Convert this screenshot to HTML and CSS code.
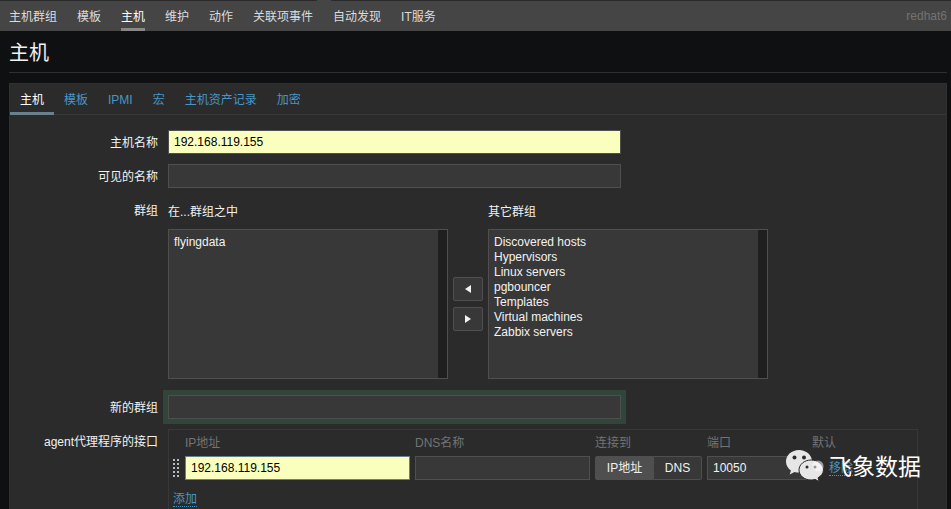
FILE: index.html
```html
<!DOCTYPE html>
<html lang="zh-CN">
<head>
<meta charset="utf-8">
<title>主机</title>
<link rel="stylesheet" href="styles.css">
</head>
<body>
<nav class="topnav">
  <a href="#">主机群组</a>
  <a href="#">模板</a>
  <a href="#" class="current">主机</a>
  <a href="#">维护</a>
  <a href="#">动作</a>
  <a href="#">关联项事件</a>
  <a href="#" class="pointer">自动发现</a>
  <a href="#">IT服务</a>
  <span class="server">redhat6</span>
</nav>
<main class="page">
  <h1>主机</h1>
  <form class="panel">
    <div class="tabs">
      <a href="#" class="current">主机</a>
      <a href="#">模板</a>
      <a href="#">IPMI</a>
      <a href="#">宏</a>
      <a href="#">主机资产记录</a>
      <a href="#">加密</a>
    </div>
    <div class="fields">
      <label class="name" for="host">主机名称</label>
      <input class="wide filled" id="host" type="text" value="192.168.119.155">

      <label class="name" for="visible">可见的名称</label>
      <input class="wide" id="visible" type="text">

      <span class="name">群组</span>
      <div class="groups">
        <div class="group">
          <label for="in-groups">在...群组之中</label>
          <select id="in-groups" multiple size="10">
            <option>flyingdata</option>
          </select>
        </div>
        <div class="movers">
          <button type="button" aria-label="加入"><svg width="6" height="8" viewBox="0 0 6 8"><path d="M6 0v8L0 4z"/></svg></button>
          <button type="button" aria-label="移出"><svg width="6" height="8" viewBox="0 0 6 8"><path d="M0 0v8l6-4z"/></svg></button>
        </div>
        <div class="group">
          <label for="other-groups">其它群组</label>
          <select id="other-groups" multiple size="10">
            <option>Discovered hosts</option>
            <option>Hypervisors</option>
            <option>Linux servers</option>
            <option>pgbouncer</option>
            <option>Templates</option>
            <option>Virtual machines</option>
            <option>Zabbix servers</option>
          </select>
        </div>
      </div>

      <label class="name" for="new-group">新的群组</label>
      <input class="wide highlighted" id="new-group" type="text">

      <span class="name">agent代理程序的接口</span>
      <div class="interfaces">
        <table>
          <thead>
            <tr><th></th><th>IP地址</th><th>DNS名称</th><th>连接到</th><th>端口</th><th>默认</th><th></th></tr>
          </thead>
          <tbody>
            <tr>
              <td class="grip"><svg width="7" height="18" viewBox="0 0 7 18"><path d="M0 0h2v2H0zM4 0h2v2H4zM0 4h2v2H0zM4 4h2v2H4zM0 8h2v2H0zM4 8h2v2H4zM0 12h2v2H0zM4 12h2v2H4zM0 16h2v2H0zM4 16h2v2H4z"/></svg></td>
              <td class="ip"><input class="filled active" type="text" aria-label="IP地址" value="192.168.119.155"></td>
              <td class="dns"><input type="text" aria-label="DNS名称"></td>
              <td class="connect">
                <div class="segmented">
                  <label><input type="radio" name="connect" checked>IP地址</label>
                  <label><input type="radio" name="connect">DNS</label>
                </div>
              </td>
              <td class="port"><input type="text" aria-label="端口" value="10050"></td>
              <td class="default"><input type="radio" name="default" aria-label="默认" checked></td>
              <td class="remove"><a href="#" class="action">移除</a>
                <div class="brand">
                  <svg width="38" height="32" viewBox="0 0 38 32">
                    <path class="bubble" d="M13 0C5.800 0 0 5 0 11.500c0 3.700 1.900 6.800 4.900 8.900L3.700 24.500l4.800-2.600c1.400.4 2.900.6 4.500.6C20.200 22.500 26 17.600 26 11.300S20.200 0 13 0z"/>
                    <path class="bubble front" d="M25 10c-6.600 0-12 4.500-12 10s5.400 10 12 10c1.400 0 2.800-.2 4-.6l4.200 2.100-1.200-3.700c3.100-1.800 5.500-4.600 5.500-7.800C37.500 14.500 31.600 10 25 10z"/>
                    <g class="eyes"><circle cx="8.500" cy="7.500" r="2"/><circle cx="18" cy="7.500" r="2"/><circle cx="21" cy="17" r="1.500"/><circle cx="29" cy="17" r="1.500"/></g>
                    <circle class="shine" cx="32" cy="16" r="5.500"/>
                  </svg>
                  <span>飞象数据</span>
                </div>
              </td>
            </tr>
          </tbody>
        </table>
        <a href="#" class="action add">添加</a>
      </div>
    </div>
  </form>
</main>
</body>
</html>
```
FILE: styles.css
```css
* { box-sizing: border-box; }

body {
  margin: 0;
  min-height: 100vh;
  display: flex;
  flex-direction: column;
  background: #0e1012;
  color: #f2f2f2;
  font: 12px/14px "Liberation Sans", "Noto Sans CJK SC", sans-serif;
}

input, select, button { font: inherit; color: inherit; margin: 0; }
a { color: #4796c4; text-decoration: none; }

.topnav {
  display: flex;
  gap: 20px;
  height: 31px;
  padding: 0 4px 0 9px;
  border-top: 1px solid #2b2b2b;
  background: #454545;
  line-height: 32px;
}
.topnav a { position: relative; height: 30px; color: #dcdcdc; white-space: nowrap; }
.topnav .current { color: #fff; border-bottom: 3px solid #888; }
.topnav .pointer::before {
  content: "";
  position: absolute;
  top: -1px;
  left: -16px;
  width: 14px;
  height: 1px;
  background: #454545;
}
.topnav .server { margin-left: auto; color: #737373; line-height: 30px; }

.page {
  flex: 1;
  display: flex;
  flex-direction: column;
  padding: 0 4px 0 9px;
}
h1 {
  margin: 0 0 10px;
  height: 42px;
  border-bottom: 1px solid #303030;
  font-size: 20px;
  font-weight: 400;
  line-height: 45px;
}

.panel {
  flex: 1;
  display: flex;
  flex-direction: column;
  border: 1px solid #303030;
  border-bottom: 0;
  background: #2b2b2b;
}
.tabs {
  display: flex;
  height: 31px;
  border-bottom: 1px solid #383838;
  line-height: 33px;
}
.tabs a { height: 31px; padding: 0 10px; }
.tabs .current { color: #fff; border-bottom: 3px solid #69808d; }

.fields {
  flex: 1;
  display: grid;
  grid-template-columns: 148px 1fr;
  grid-template-rows: auto auto auto auto 1fr;
  gap: 10px;
  padding-top: 15px;
}
.name { height: 24px; line-height: 26px; text-align: right; white-space: nowrap; }

input[type="text"] {
  width: 100%;
  height: 24px;
  padding: 0 5px;
  border: 1px solid #4f4f4f;
  background: #383838;
  outline: 0;
}
input[type="text"].wide { width: 453px; max-width: 100%; }
input[type="text"].filled { background: #faffbd; color: #000; }
input[type="text"].active { border-color: #69808d; }
input[type="text"].highlighted { box-shadow: 0 0 0 5px #32453a; }

.groups { display: flex; gap: 5px; margin-bottom: 6px; }
.group { display: flex; flex-direction: column; width: 280px; }
.group label { height: 26px; margin-bottom: 5px; line-height: 28px; }
select {
  height: 150px;
  padding: 5px;
  border: 1px solid #4f4f4f;
  border-radius: 0;
  background: linear-gradient(#1f1f1f, #1f1f1f) right / 9px 100% no-repeat #383838;
  overflow: hidden;
  outline: 0;
}
option { min-height: 15px; padding: 0; line-height: 15px; }
.movers { display: flex; flex-direction: column; justify-content: center; gap: 6px; padding-top: 31px; }
.movers button {
  display: flex;
  align-items: center;
  justify-content: center;
  width: 30px;
  height: 24px;
  padding: 0;
  border: 1px solid #4f4f4f;
  border-radius: 2px;
  background: #383838;
}
svg { display: block; fill: #f2f2f2; }

.interfaces {
  width: 750px;
  padding: 0 0 0 4px;
  border: 1px solid #383838;
  border-bottom: 0;
}
table { width: 690px; border-collapse: collapse; table-layout: fixed; }
th {
  height: 26px;
  padding: 0;
  color: #737373;
  font-weight: 400;
  line-height: 28px;
  text-align: left;
  white-space: nowrap;
}
thead tr { height: 26px; line-height: 26px; }
th { line-height: 26px; }
th:nth-child(1) { width: 12px; }
th:nth-child(2) { width: 230px; }
th:nth-child(3) { width: 180px; }
th:nth-child(4) { width: 112px; }
th:nth-child(5) { width: 105px; }
th:nth-child(6) { width: 17px; }
td { height: 24px; padding: 0 5px 0 0; }
.grip { padding-right: 0; }
.grip svg { fill: #b4bcc2; }

.segmented { display: flex; height: 24px; }
.segmented label {
  flex: 1 0 auto;
  padding: 0 10px;
  border: 1px solid #4f4f4f;
  background: #383838;
  line-height: 22px;
  text-align: center;
  white-space: nowrap;
}
.segmented label:first-child { border-radius: 2px 0 0 2px; }
.segmented label:last-child { border-left: 0; border-radius: 0 2px 2px 0; }
.segmented label:has(:checked) { background: #4f4f4f; }
.segmented input { position: absolute; opacity: 0; width: 1px; height: 1px; }

.default input {
  display: block;
  appearance: none;
  width: 12px;
  height: 12px;
  border: 1px solid #4f4f4f;
  border-radius: 50%;
  background: #383838;
}
.action { border-bottom: 1px dotted #4796c4; }
.add { display: inline-block; margin-top: 12px; line-height: 14px; }

.remove { position: relative; }
.brand {
  position: absolute;
  top: -6px;
  left: -43px;
  display: flex;
  gap: 5px;
  color: #fff;
  font-size: 23px;
  line-height: 34px;
  white-space: nowrap;
  pointer-events: none;
}
.bubble { fill: #e6e6e6; }
.front { stroke: #2b2b2b; stroke-width: 1; }
.eyes { fill: #2b2b2b; }
.shine { fill: #fff; fill-opacity: 0.5; }
```
